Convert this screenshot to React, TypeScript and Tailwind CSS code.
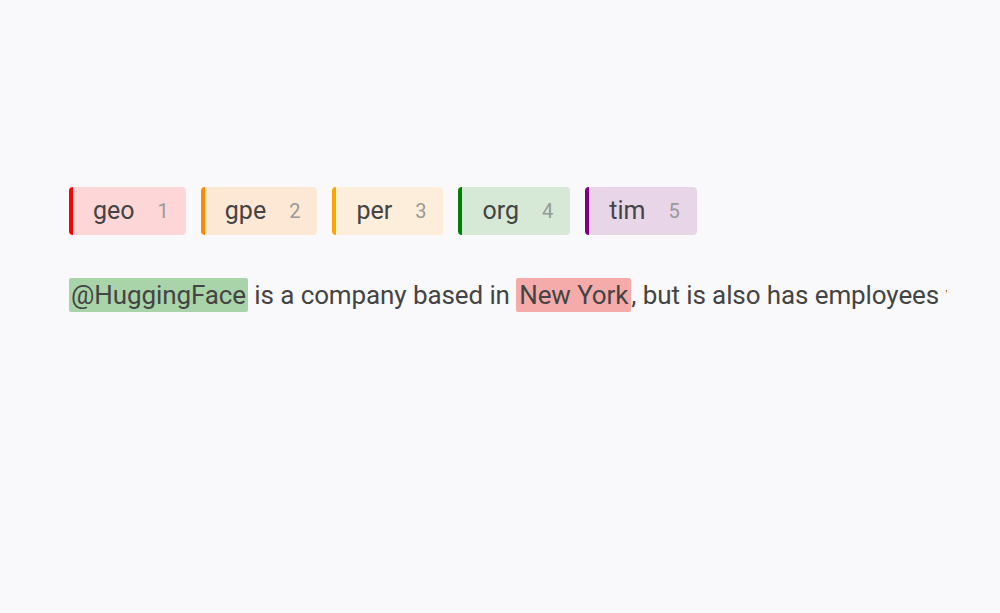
import React from 'react';

const labels = [
  { name: 'geo', key: 1, border: 'border-[#ff0000]', bg: 'bg-[#fdd6d8]' },
  { name: 'gpe', key: 2, border: 'border-[#ff8c00]', bg: 'bg-[#fce8d5]' },
  { name: 'per', key: 3, border: 'border-[#ffa500]', bg: 'bg-[#fdeedb]' },
  { name: 'org', key: 4, border: 'border-[#008000]', bg: 'bg-[#d6e8d6]' },
  { name: 'tim', key: 5, border: 'border-[#800080]', bg: 'bg-[#e8d5e8]' },
];

export default function App() {
  return (
    <div className="min-h-[613px] w-[1000px] bg-[#f9f9fb] pt-[187px] pl-[69px] font-['Roboto',sans-serif] text-[#444]">
      <div className="flex gap-[15px]">
        {labels.map((l) => (
          <div
            key={l.name}
            className={`flex h-[48px] items-center rounded-[4px] border-l-[4px] ${l.border} ${l.bg} pl-[20px] pr-[17px] text-[25px]`}
          >
            <span>{l.name}</span>
            <span className="ml-[23px] text-[20px] text-[#999]">{l.key}</span>
          </div>
        ))}
      </div>

      <div className="mt-[43px] w-[878px] overflow-hidden whitespace-nowrap text-[26px] leading-[35px] tracking-[-0.1px]">
        <span className="rounded-[2px] bg-[#a9d4a9] px-[2px] py-[2px]">@HuggingFace</span>
        {' is a company based in '}
        <span className="rounded-[2px] bg-[#f6abab] px-[3px] py-[2px]">New York</span>
        {', but is also has employees working in Paris'}
      </div>
    </div>
  );
}
